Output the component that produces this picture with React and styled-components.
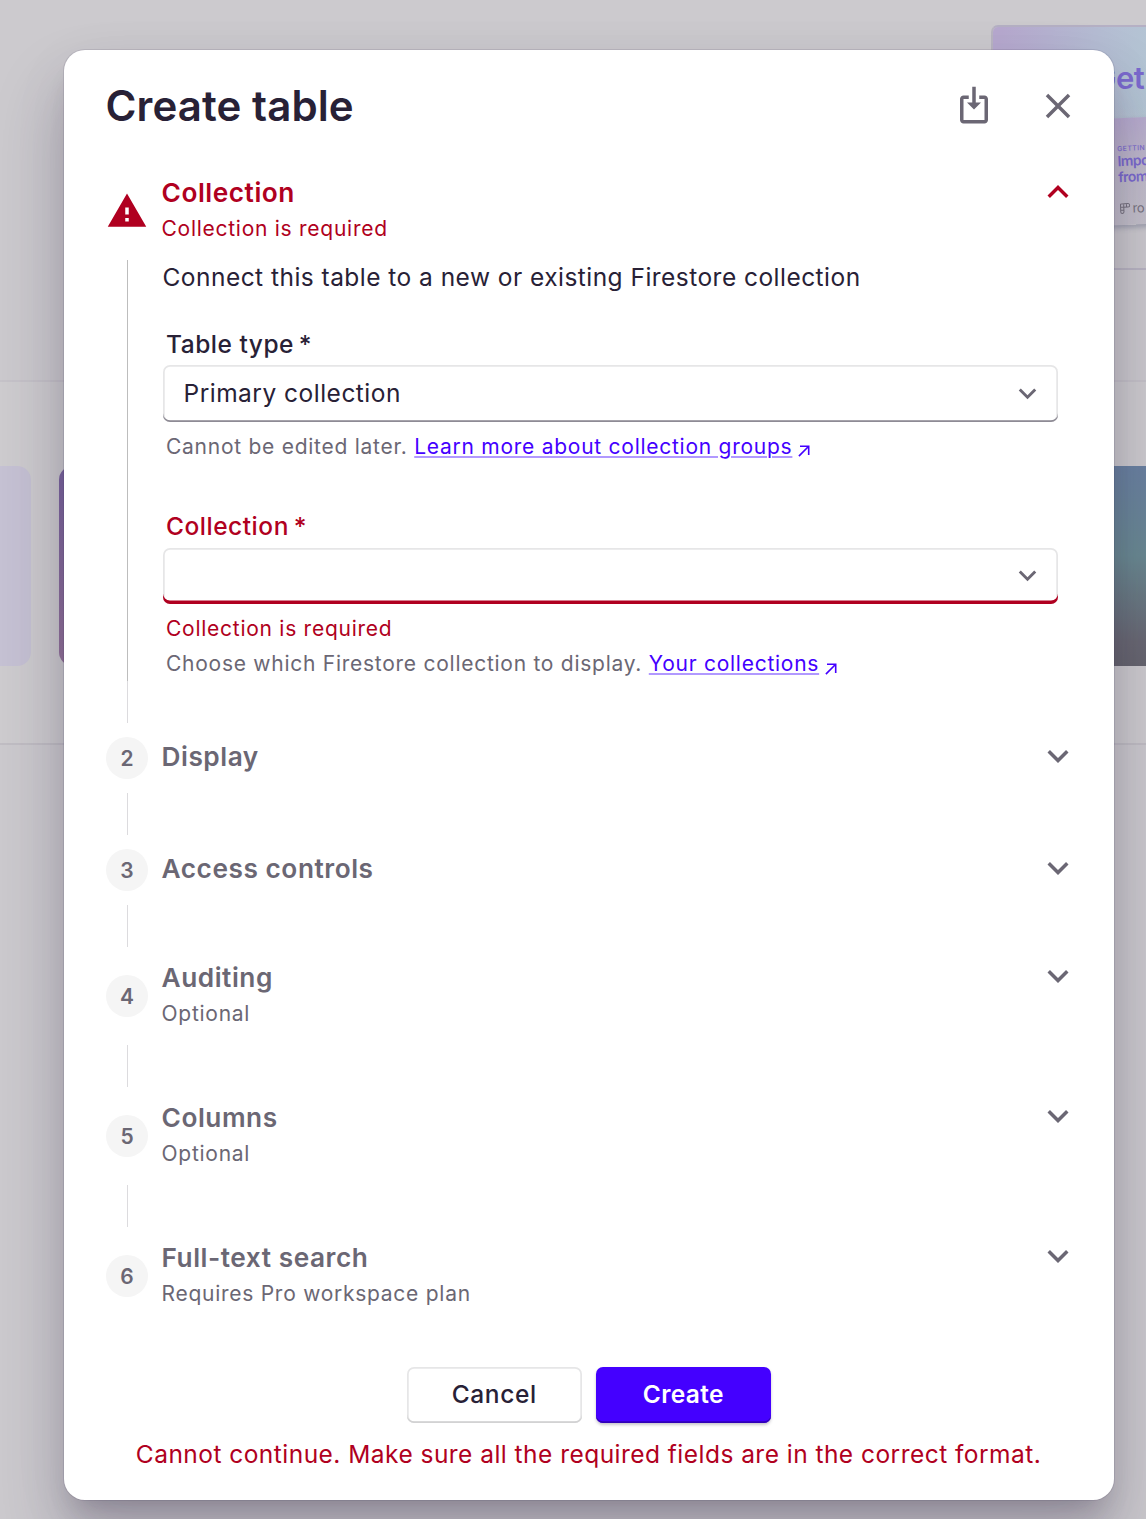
import React from "react";
import styled, { createGlobalStyle, css } from "styled-components";

const ERROR = "#b00020";
const PRIMARY = "#4400ff";
const INK = "#282136";
const MUTED = "#6b6774";

const GlobalStyle = createGlobalStyle`
  *, *::before, *::after { box-sizing: border-box; }
  body {
    margin: 0;
    font-family: Inter, "Liberation Sans", sans-serif;
    -webkit-font-smoothing: antialiased;
  }
`;

/* ---------- Page behind the dialog ---------- */

const Page = styled.div`
  position: relative;
  width: 1146px;
  height: 1519px;
  overflow: hidden;
  background: #cccace;
`;

const Hero = styled.section`
  display: flex;
  justify-content: flex-end;
  height: 382px;
  padding-top: 25px;
  border-bottom: 2px solid #c6c3c9;
`;

const GuideCard = styled.article`
  width: 155px;
  height: 245px;
  overflow: hidden;
  border: 2px solid #b9b5c2;
  border-top-color: #b5b0c4;
  border-right: 0;
  border-radius: 7px 0 0 0;
`;

const GuideArt = styled.div`
  height: 200px;
  padding: 34px 0 0 93px;
  background: linear-gradient(#cccace00 40%, #cccace 85%),
    linear-gradient(100deg, #b7a9cf 5%, #b5bcd3 55%, #b3c9d4 100%);
`;

const GuideTitle = styled.div`
  font-size: 31px;
  line-height: 34px;
  font-weight: 600;
  letter-spacing: -0.5px;
  color: #7b6ace;
`;

const GuideSheet = styled.div`
  width: 120px;
  height: 107px;
  margin-top: 22px;
  padding: 26px 0 0 32px;
  background: linear-gradient(165deg, #b5a7cf, #c0bbcb 45%, #c6c3ca);
  box-shadow: 0 3px 5px rgba(80, 90, 120, 0.35);
  transform: rotate(-2.5deg);
`;

const SheetKicker = styled.div`
  font-size: 7px;
  line-height: 9px;
  letter-spacing: 0.4px;
  font-weight: 500;
  color: #7b6ace;
`;

const SheetTitle = styled.div`
  font-size: 14px;
  line-height: 16px;
  font-weight: 600;
  letter-spacing: -0.6px;
  color: #7b6ace;
`;

const SheetBrand = styled.div`
  display: flex;
  align-items: center;
  gap: 2px;
  margin-top: 15px;
  font-size: 13px;
  line-height: 16px;
  letter-spacing: -0.6px;
  color: #77737f;
`;

const Shelf = styled.section`
  display: flex;
  justify-content: space-between;
  height: 363px;
  padding-top: 84px;
  background: #cecccf;
  border-bottom: 2px solid #c1bec4;
`;

const ShelfGroup = styled.div`
  display: flex;
  gap: 28px;
`;

const tones = {
  lavender: css`
    width: 31px;
    background: #c6c2d4;
    border-radius: 0 14px 14px 0;
  `,
  plum: css`
    width: 300px;
    background: linear-gradient(#7a659f, #94749a);
    border-radius: 14px;
  `,
  teal: css`
    width: 300px;
    background: linear-gradient(#6a82a1, #6a8a92 45%, #696872 88%, #66656e);
  `,
};

const Tile = styled.div`
  height: 200px;
  ${(p) => tones[p.$tone]}
`;

/* ---------- Dialog ---------- */

const Dialog = styled.div`
  position: absolute;
  top: 50px;
  left: 64px;
  width: 1050px;
  height: 1450px;
  padding: 0 42px;
  display: flex;
  flex-direction: column;
  background: #fff;
  border-radius: 21px;
  color: ${INK};
  box-shadow:
    0 0 0 1px rgba(60, 50, 85, 0.12),
    0 19px 26px -12px rgba(40, 33, 54, 0.24),
    0 42px 66px 5px rgba(40, 33, 70, 0.22),
    0 16px 60px 6px rgba(40, 33, 54, 0.04);
`;

const DialogHeader = styled.header`
  display: flex;
  align-items: center;
  justify-content: space-between;
  height: 112px;
  margin-right: -7px;
`;

const DialogTitle = styled.h1`
  margin: 0 0 0 -0.5px;
  font-size: 42px;
  line-height: 56px;
  font-weight: 600;
  letter-spacing: 0.1px;
`;

const HeaderActions = styled.div`
  display: flex;
  gap: 42px;
  color: ${MUTED};
`;

const IconButton = styled.button`
  display: flex;
  padding: 0;
  border: 0;
  background: none;
  color: inherit;
`;

const Icon = styled.svg`
  display: block;
  flex: none;
  width: ${(p) => p.$size || 42}px;
  height: ${(p) => p.$size || 42}px;
  fill: currentColor;
`;

const Steps = styled.div`
  display: flex;
  flex-direction: column;
  margin-top: 14px;
`;

const StepHeader = styled.div`
  display: flex;
  align-items: center;
  gap: 13.5px;
  height: ${(p) => (p.$tall ? 70 : 42)}px;
  margin-right: -7px;
  color: ${(p) => (p.$error ? ERROR : MUTED)};
`;

const StepBadge = styled.span`
  display: flex;
  align-items: center;
  justify-content: center;
  width: 42px;
  height: 42px;
  border-radius: 50%;
  background: #f5f5f5;
  font-size: 21px;
  font-weight: 600;
`;

const StepText = styled.div`
  flex: 1;
`;

const StepTitle = styled.div`
  display: flex;
  align-items: center;
  justify-content: space-between;
  height: ${(p) => (p.$tall ? 32 : 42)}px;
  padding-bottom: ${(p) => (p.$tall ? 0 : 4)}px;
  font-size: 26.25px;
  font-weight: 600;
  letter-spacing: 0.54px;
`;

const ChevronSlot = styled.span`
  display: flex;
  margin-top: ${(p) => (p.$open ? 0 : p.$tall ? -2 : 0)}px;
`;

const StepNote = styled.div`
  height: 38px;
  font-size: 21px;
  line-height: 41px;
  letter-spacing: 0.735px;
`;

const Connector = styled.div`
  width: 1px;
  height: 42px;
  margin: ${(p) => (p.$flush ? "0" : "14px")} 0 14px 21px;
  background: #dcdbde;
`;

const StepBody = styled.div`
  height: 421px;
  margin: 14px 14px 0 21px;
  padding-left: 35px;
  border-left: 1px solid #bdbdbd;
`;

const Lead = styled.p`
  margin: 0 0 0 -0.5px;
  font-size: 24.5px;
  line-height: 35px;
  letter-spacing: 0.465px;
`;

const Field = styled.div`
  display: flex;
  flex-direction: column;
  margin-top: ${(p) => p.$gap}px;
`;

const FieldLabel = styled.label`
  margin: 0 0 7.75px 3px;
  font-size: 24.5px;
  line-height: 28px;
  font-weight: 500;
  letter-spacing: 0.52px;
  color: ${(p) => (p.$error ? ERROR : INK)};
`;

const Select = styled.div`
  display: flex;
  align-items: center;
  justify-content: space-between;
  height: 56.5px;
  padding: 0 13px 1.5px 20.5px;
  border-radius: 7px;
  font-size: 24.5px;
  letter-spacing: 0.49px;
  box-shadow: ${(p) =>
    p.$error
      ? `inset 0 -3.5px 0 0 ${ERROR}, inset 0 0 0 1.75px #e6e6e7`
      : "inset 0 -1.75px 0 0 #8e8b95, inset 0 0 0 1.75px #e6e6e7"};

  svg {
    color: ${MUTED};
    margin-top: ${(p) => (p.$error ? 0 : 1)}px;
  }
`;

const HelperStack = styled.div`
  display: flex;
  flex-direction: column;
  gap: 6px;
  margin: 10px 0 0 3px;
`;

const Helper = styled.div`
  display: flex;
  align-items: center;
  height: 29px;
  font-size: 21px;
  line-height: 29px;
  letter-spacing: 0.738px;
  white-space: pre;
  color: ${(p) => (p.$error ? ERROR : MUTED)};
`;

const Link = styled.a`
  color: ${PRIMARY};
  text-decoration: underline;
  text-decoration-color: #b199ff;
  text-decoration-thickness: 2px;
  text-underline-offset: 2px;
`;

const LinkIcon = styled.svg`
  width: 12px;
  height: 12px;
  margin: 10px 0 0 5.5px;
  fill: none;
  stroke: ${PRIMARY};
  stroke-width: 1.6;
`;

const Footer = styled.footer`
  display: flex;
  flex-direction: column;
  align-items: center;
  margin-top: 56px;
`;

const Actions = styled.div`
  display: flex;
  gap: 14px;
`;

const Button = styled.button`
  width: 175px;
  height: 56px;
  padding: 0 0.5px 2px 0;
  border: 0;
  border-radius: 7px;
  font-family: inherit;
  font-size: 24.5px;
  font-weight: ${(p) => (p.$primary ? 600 : 500)};
  letter-spacing: ${(p) => (p.$primary ? 0.35 : 0.6)}px;
  color: ${(p) => (p.$primary ? "#fff" : INK)};
  background: ${(p) => (p.$primary ? PRIMARY : "#fff")};
  box-shadow: ${(p) =>
    p.$primary
      ? "inset 0 -1.75px 0 0 #3000b8, 0 2px 3px rgba(40, 33, 54, 0.25)"
      : "inset 0 -1.75px 0 0 #d2d2d3, inset 0 0 0 1.75px #e6e6e7"};
`;

const FormError = styled.p`
  margin: 14px 1px 0 0;
  font-size: 24.5px;
  line-height: 35px;
  letter-spacing: 0.465px;
  white-space: nowrap;
  color: ${ERROR};
`;

/* ---------- Icons ---------- */

const paths = {
  import:
    "M11 1h2v9h3l-4 4-4-4h3V1zM9 6v2H6v12h12V8h-3V6h3c1.1 0 2 .9 2 2v12c0 1.1-.9 2-2 2H6c-1.1 0-2-.9-2-2V8c0-1.1.9-2 2-2h3z",
  close:
    "M19 6.41 17.59 5 12 10.59 6.41 5 5 6.41 10.59 12 5 17.59 6.41 19 12 13.41 17.59 19 19 17.59 13.41 12z",
  warning: "M1 21h22L12 2 1 21zm12-3h-2v-2h2v2zm0-4h-2v-4h2v4z",
  down: "M7.41 8.59 12 13.17l4.59-4.58L18 10l-6 6-6-6z",
  up: "M7.41 15.41 12 10.83l4.59 4.58L18 14l-6-6-6 6z",
};

const Glyph = ({ name, size }) => (
  <Icon viewBox="0 0 24 24" $size={size}>
    <path d={paths[name]} />
  </Icon>
);

const ExternalLink = ({ children }) => (
  <>
    <Link>{children}</Link>
    <LinkIcon viewBox="0 0 12 12">
      <path d="M2 1.3h8.7V10M10.7 1.3.9 11.1" />
    </LinkIcon>
  </>
);

function Step({ number, title, note, error, open }) {
  const tall = Boolean(note);
  return (
    <StepHeader $tall={tall} $error={error}>
      {error ? <Glyph name="warning" /> : <StepBadge>{number}</StepBadge>}
      <StepText>
        <StepTitle $tall={tall}>
          {title}
          <ChevronSlot $tall={tall} $open={open}>
            <Glyph name={open ? "up" : "down"} />
          </ChevronSlot>
        </StepTitle>
        {note && <StepNote>{note}</StepNote>}
      </StepText>
    </StepHeader>
  );
}

const laterSteps = [
  { number: 2, title: "Display" },
  { number: 3, title: "Access controls" },
  { number: 4, title: "Auditing", note: "Optional" },
  { number: 5, title: "Columns", note: "Optional" },
  { number: 6, title: "Full-text search", note: "Requires Pro workspace plan" },
];

export default function App() {
  return (
    <>
      <GlobalStyle />
      <Page>
        <Hero>
          <GuideCard>
            <GuideArt>
              <GuideTitle>&nbsp;Get</GuideTitle>
              <GuideSheet>
                <SheetKicker>GETTIN</SheetKicker>
                <SheetTitle>Impo</SheetTitle>
                <SheetTitle>from</SheetTitle>
                <SheetBrand>
                  <svg width="11" height="11" viewBox="0 0 11 11" fill="none" stroke="currentColor">
                    <path d="M1.5.8h7a1.6 1.6 0 0 1 0 3.4H4.2v4.6a1.5 1.5 0 0 1-3.2 0V1.5zM4.2.8v3.4M1 4.2h3.2M1 7h3.2M7 .8v3.4" />
                  </svg>
                  ro
                </SheetBrand>
              </GuideSheet>
            </GuideArt>
          </GuideCard>
        </Hero>
        <Shelf>
          <ShelfGroup>
            <Tile $tone="lavender" />
            <Tile $tone="plum" />
          </ShelfGroup>
          <Tile $tone="teal" />
        </Shelf>

        <Dialog role="dialog">
          <DialogHeader>
            <DialogTitle>Create table</DialogTitle>
            <HeaderActions>
              <IconButton aria-label="Import">
                <Glyph name="import" />
              </IconButton>
              <IconButton aria-label="Close">
                <Glyph name="close" />
              </IconButton>
            </HeaderActions>
          </DialogHeader>

          <Steps>
            <Step title="Collection" note="Collection is required" error open />
            <StepBody>
              <Lead>Connect this table to a new or existing Firestore collection</Lead>
              <Field $gap={34.5}>
                <FieldLabel>Table type&thinsp;*</FieldLabel>
                <Select>
                  Primary collection
                  <Glyph name="down" size={35} />
                </Select>
                <HelperStack>
                  <Helper>
                    {"Cannot be edited later. "}
                    <ExternalLink>Learn more about collection groups</ExternalLink>
                  </Helper>
                </HelperStack>
              </Field>
              <Field $gap={51.25}>
                <FieldLabel $error>Collection&thinsp;*</FieldLabel>
                <Select $error>
                  <span />
                  <Glyph name="down" size={35} />
                </Select>
                <HelperStack>
                  <Helper $error>Collection is required</Helper>
                  <Helper>
                    {"Choose which Firestore collection to display. "}
                    <ExternalLink>Your collections</ExternalLink>
                  </Helper>
                </HelperStack>
              </Field>
            </StepBody>
            {laterSteps.map((step, i) => (
              <React.Fragment key={step.number}>
                <Connector $flush={i === 0} />
                <Step {...step} />
              </React.Fragment>
            ))}
          </Steps>

          <Footer>
            <Actions>
              <Button>Cancel</Button>
              <Button $primary>Create</Button>
            </Actions>
            <FormError>
              Cannot continue. Make sure all the required fields are in the correct format.
            </FormError>
          </Footer>
        </Dialog>
      </Page>
    </>
  );
}
